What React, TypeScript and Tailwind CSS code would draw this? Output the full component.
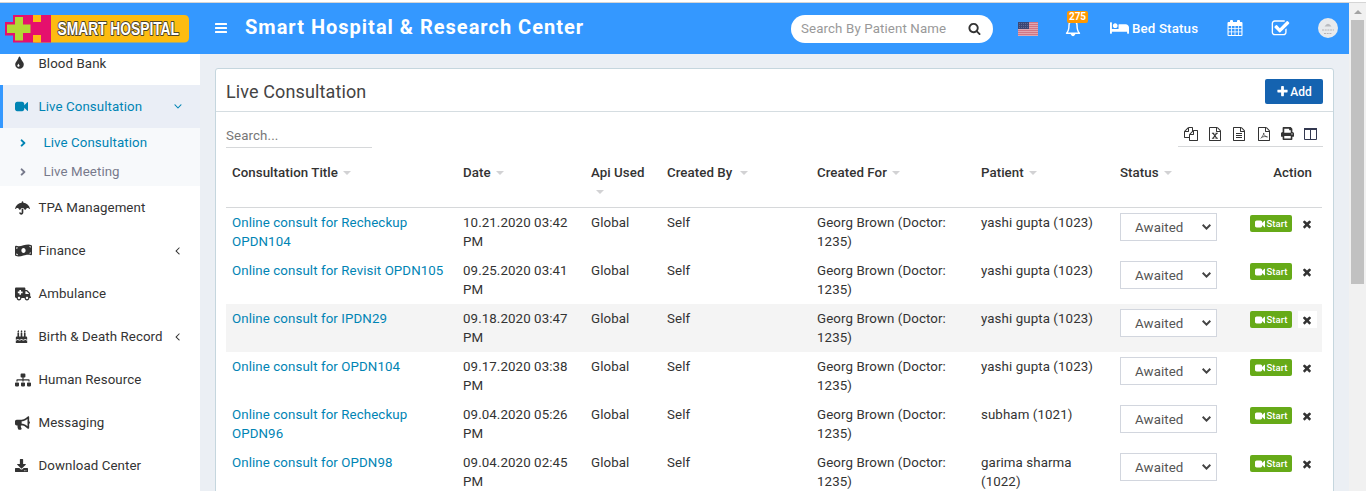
import React from "react";
import {
  FaAmbulance, FaAngleRight, FaBed, FaBirthdayCake, FaBullhorn, FaDownload,
  FaMoneyBillWave, FaPrint, FaSitemap, FaUmbrella,
} from "react-icons/fa";

const TINT = "M896 1152q0-36-20-69-1-1-15.500-22.500t-25.500-38-25-44-21-50.500q-4-16-21-16t-21 16q-7 23-21 50.500t-25 44-25.500 38-15.500 22.500q-20 33-20 69 0 53 37.500 90.500t90.500 37.500 90.500-37.500 37.500-90.500zm512-128q0 212-150 362t-362 150-362-150-150-362q0-145 81-275 6-9 62.500-90.500t101-151 99.500-178 83-201.500q9-30 34-47t51-17 51.500 17 33.500 47q28 93 83 201.500t99.500 178 101 151 62.500 90.500q81 127 81 275z";
const SEARCH = "M1216 832q0-185-131.500-316.500t-316.500-131.500-316.500 131.500-131.500 316.500 131.500 316.500 316.500 131.500 316.500-131.500 131.500-316.500zm512 832q0 52-38 90t-90 38q-54 0-90-38l-343-342q-179 124-399 124-143 0-273.500-55.500t-225-150-150-225-55.500-273.500 55.500-273.500 150-225 225-150 273.500-55.500 273.500 55.500 225 150 150 225 55.500 273.500q0 220-124 399l343 343q37 37 37 90z";
const PLUS = "M1600 736v192q0 40-28 68t-68 28h-416v416q0 40-28 68t-68 28h-192q-40 0-68-28t-28-68v-416h-416q-40 0-68-28t-28-68v-192q0-40 28-68t68-28h416v-416q0-40 28-68t68-28h192q40 0 68 28t28 68v416h416q40 0 68 28t28 68z";
const TIMES = "M1490 1322q0 40-28 68l-136 136q-28 28-68 28t-68-28l-294-294-294 294q-28 28-68 28t-68-28l-136-136q-28-28-28-68t28-68l294-294-294-294q-28-28-28-68t28-68l136-136q28-28 68-28t68 28l294 294 294-294q28-28 68-28t68 28l136 136q28 28 28 68t-28 68l-294 294 294 294q28 28 28 68z";
const VIDEO = "M1792 352v1088q0 42-39 59-13 5-25 5-27 0-45-19l-403-403v166q0 119-84.500 203.500t-203.500 84.500h-704q-119 0-203.500-84.500t-84.500-203.500v-704q0-119 84.500-203.500t203.500-84.500h704q119 0 203.500 84.500t84.500 203.500v165l403-402q18-19 45-19 12 0 25 5 39 17 39 59z";
const ANGLE = "M1203 544q0 13-10 23l-393 393 393 393q10 10 10 23t-10 23l-50 50q-10 10-23 10t-23-10l-466-466q-10-10-10-23t10-23l466-466q10-10 23-10t23 10l50 50q10 10 10 23z";
const CHECK = "M1472 930v318q0 119-84.500 203.500t-203.500 84.500h-832q-119 0-203.500-84.500t-84.500-203.500v-832q0-119 84.500-203.500t203.500-84.500h832q63 0 117 25 15 7 18 23 3 17-9 29l-49 49q-10 10-23 10-3 0-9-2-23-6-45-6h-832q-66 0-113 47t-47 113v832q0 66 47 113t113 47h832q66 0 113-47t47-113v-254q0-13 9-22l64-64q10-10 23-10 6 0 12 3 20 8 20 29zm231-489l-814 814q-24 24-57 24t-57-24l-430-430q-24-24-24-57t24-57l110-110q24-24 57-24t57 24l263 263 647-647q24-24 57-24t57 24l110 110q24 24 24 57t-24 57z";
const COPY = "M1696 384q40 0 68 28t28 68v1216q0 40-28 68t-68 28h-960q-40 0-68-28t-28-68v-288h-544q-40 0-68-28t-28-68v-672q0-40 20-88t48-76l408-408q28-28 76-48t88-20h416q40 0 68 28t28 68v328q68-40 128-40h416zm-544 213l-299 299h299v-299zm-640-384l-299 299h299v-299zm196 647l316-316v-416h-384v416q0 40-28 68t-68 28h-416v640h512v-256q0-40 20-88t48-76zm956 804v-1152h-384v416q0 40-28 68t-68 28h-416v640h896z";
const FILE = "M1596 380q28 28 48 76t20 88v1152q0 40-28 68t-68 28h-1344q-40 0-68-28t-28-68v-1600q0-40 28-68t68-28h896q40 0 88 20t76 48zm-444-244v376h376q-10-29-22-41l-313-313q-12-12-41-22zm384 1528v-1024h-416q-40 0-68-28t-28-68v-416h-768v1536h1280z";

function Glyph({ d, className, children }: { d?: string; className?: string; children?: React.ReactNode }) {
  return (
    <svg viewBox="0 0 1792 1792" fill="currentColor" className={className} aria-hidden="true">
      {d && <path d={d} />}
      {children}
    </svg>
  );
}

function Logo() {
  return (
    <svg width="185" height="30" viewBox="0 0 185 30" role="img" className="overflow-visible">
      <path d="M30 0H179Q184 0 184 5V22.500Q184 27.500 179 27.500H30Z" fill="#fdbc11" />
      <path d="M8 0H46V27.500H8V20.500H0V7H8Z" fill="#e5106d" />
      <path d="M28 0H36V7H28ZM28 20H36V27.500H28Z" fill="#fdbc11" />
      <path d="M10 2H18V9.500H25.500V18H18V25.500H10V18H2V9.500H10Z" fill="#b2d935" />
      <text x="52.500" y="20" fontFamily="'Liberation Sans', Arial, sans-serif" fontWeight="700" fontSize="17.500"
        textLength="121.500" lengthAdjust="spacingAndGlyphs" fill="#fff" stroke="#4c432e" strokeWidth="2"
        strokeLinejoin="round" paintOrder="stroke">SMART HOSPITAL</text>
    </svg>
  );
}

function Flag() {
  return (
    <svg width="20" height="14" viewBox="0 0 20 14">
      <rect width="20" height="14" fill="#f3e6ea" />
      {[0, 2, 4, 6, 8, 10, 12].map((y) => (
        <rect key={y} y={y + 0.300} width="20" height="1.100" fill="#c2475a" />
      ))}
      <rect width="11" height="7" fill="#3c4674" />
      {[1.500, 3.500, 5.500].map((y) => (
        <path key={y} d={`M1 ${y}H10`} stroke="#8189ab" strokeWidth="0.700" strokeDasharray="0.800 1.200" />
      ))}
    </svg>
  );
}

function TopBar() {
  return (
    <header className="flex h-[51px] shrink-0 items-center bg-[#3498ff] text-white">
      <div className="w-[200px] pt-[3px] pl-[5px]"><Logo /></div>
      <svg width="12" height="11" viewBox="0 0 12 11" className="-mt-[1px] ml-[15px]" fill="#fff">
        <rect y="0" width="12" height="2" rx=".5" />
        <rect y="4" width="12" height="2" rx=".5" />
        <rect y="8" width="12" height="2" rx=".5" />
      </svg>
      <h1 className="-mt-[4px] ml-[18px] w-[546px] text-[20px] leading-6 font-bold tracking-[1px] whitespace-nowrap">Smart Hospital &amp; Research Center</h1>
      <div className="flex h-7 w-[202px] items-center rounded-full bg-white pl-2.5 text-[13.300px] text-[#999]">
        <span className="w-[167px] tracking-[0.120px] whitespace-nowrap">Search By Patient Name</span>
        <Glyph d={SEARCH} className="-mt-[1px] h-[13px] w-[13px] text-[#333]" />
      </div>
      <div className="ml-[25px]"><Flag /></div>
      <div className="relative ml-[27px] h-[17px] w-[16px]">
        <svg width="16" height="17" viewBox="0 0 16 17" fill="none" stroke="#fff" strokeWidth="1.400" strokeLinejoin="round">
          <path d="M1.500 13.300C3.300 11.500 4 8.500 4 5C4 3 5.500 1.500 8 1.500S12 3 12 5C12 8.500 12.700 11.500 14.500 13.300Z" />
          <path d="M6.300 14Q8 17 9.700 14Z" fill="#fff" />
        </svg>
        <span className="absolute -top-[9px] left-[2px] flex h-3 w-[21px] items-center justify-center rounded-[2px] bg-[#ff9800] text-[10px] leading-none font-bold">275</span>
      </div>
      <div className="ml-[29px] flex w-[117px] items-center text-[13.300px] font-medium">
        <FaBed className="-mt-[2px] mr-[3px] h-[18px] w-[19px]" />
        <span className="tracking-[0.150px] whitespace-nowrap">Bed Status</span>
      </div>
      <svg width="16" height="16" viewBox="0 0 16 16" className="-mt-[2px]" fill="#fff">
        <path fillRule="evenodd" d="M1.500 2H14.500Q15.500 2 15.500 3V15Q15.500 16 14.500 16H1.500Q.5 16 .5 15V3Q.5 2 1.500 2ZM1.600 6V8.200H4.200V6ZM5 6V8.200H7.600V6ZM8.400 6V8.200H11V6ZM11.800 6V8.200H14.400V6ZM1.600 9V11.500H4.200V9ZM5 9V11.500H7.600V9ZM8.400 9V11.500H11V9ZM11.800 9V11.500H14.400V9ZM1.600 12.300V14.900H4.200V12.300ZM5 12.300V14.900H7.600V12.300ZM8.400 12.300V14.900H11V12.300ZM11.800 12.300V14.900H14.400V12.300Z" />
        <rect x="3" y="0" width="3" height="4.500" rx="1" />
        <rect x="10" y="0" width="3" height="4.500" rx="1" />
      </svg>
      <Glyph d={CHECK} className="ml-[28px] h-[19px] w-[19px]" />
      <svg width="20" height="20" viewBox="0 0 20 20" className="-mt-[1px] ml-[28px]">
        <circle cx="10" cy="10" r="10" fill="#e8eaed" />
        <path d="M6.500 8.500Q10 3 13.500 8.500Z" fill="#b9bbc0" />
        <path d="M4 12H16M6 15.500H14" stroke="#b9b5b6" strokeDasharray="2 .7" />
      </svg>
    </header>
  );
}

const item = "flex h-[43px] shrink-0 items-center pl-[15px] text-[13.300px] tracking-[0.080px] text-[#333] whitespace-nowrap";

function Item({ icon, label, open }: { icon: React.ReactNode; label: string; open?: boolean }) {
  return (
    <div className={item}>
      <span className="w-[23.500px]">{icon}</span>
      <span className="w-[132.500px]">{label}</span>
      {open && <Glyph d={ANGLE} className="h-[13px] w-[13px]" />}
    </div>
  );
}

function Sidebar() {
  return (
    <aside className="flex w-[200px] shrink-0 flex-col overflow-hidden bg-white">
      <div className="-mt-[12px] flex flex-col">
        <Item icon={<Glyph d={TINT} className="-ml-[3px] h-[15px] w-[15px]" />} label="Blood Bank" />
      </div>
      <div className="flex h-[43px] shrink-0 items-center border-l-[3px] border-[#3498ff] bg-[#eaeef6] pl-[12px] text-[13.300px] tracking-[0.080px] whitespace-nowrap text-[#0084b4]">
        <span className="w-[23.500px]"><Glyph d={VIDEO} className="h-[13px] w-[13px]" /></span>
        <span className="w-[132.500px]">Live Consultation</span>
        <Glyph d={ANGLE} className="h-[13px] w-[13px] -rotate-90" />
      </div>
      <div className="flex h-[58px] shrink-0 flex-col bg-[#f7f9fb] text-[13.300px] tracking-[0.080px] whitespace-nowrap">
        <div className="flex h-[29px] items-center pl-[17px] text-[#0084b4]"><FaAngleRight className="mr-[14.500px] h-3 w-3" />Live Consultation</div>
        <div className="flex h-[29px] items-center pl-[17px] text-[#777a8c]"><FaAngleRight className="mr-[14.500px] h-3 w-3" />Live Meeting</div>
      </div>
      <Item icon={<FaUmbrella className="h-[14px] w-[15px]" />} label="TPA Management" />
      <Item icon={<FaMoneyBillWave className="h-[15px] w-[17px]" />} label="Finance" open />
      <Item icon={<FaAmbulance className="h-[14px] w-[16px]" />} label="Ambulance" />
      <Item icon={<FaBirthdayCake className="h-[13px] w-[13px]" />} label="Birth & Death Record" open />
      <Item icon={<FaSitemap className="h-[14px] w-[16px]" />} label="Human Resource" />
      <Item icon={<FaBullhorn className="h-[14px] w-[15px]" />} label="Messaging" />
      <Item icon={<FaDownload className="h-[13px] w-[13px]" />} label="Download Center" />
    </aside>
  );
}

function Tools() {
  return (
    <div className="flex h-[29px] w-[145px] items-center justify-between border-b border-[#d6d8da] px-[6px] pt-[3px] text-[#333]">
      <Glyph d={COPY} className="h-[14px] w-[14px]" />
      <Glyph d={FILE} className="h-[14px] w-[14px]"><path d="M500 800h300M960 800h300M500 1440h300M960 1440h300M660 820l440 600M1100 820l-440 600" stroke="currentColor" strokeWidth="140" /></Glyph>
      <Glyph d={FILE} className="h-[14px] w-[14px]"><path d="M512 832h768M512 1088h768M512 1344h768" stroke="currentColor" strokeWidth="128" /></Glyph>
      <Glyph d={FILE} className="h-[14px] w-[14px]"><path d="M480 1470C600 1350 850 1050 860 760M860 760C860 1100 1100 1230 1340 1270M560 1330C800 1220 1100 1180 1340 1270" fill="none" stroke="currentColor" strokeWidth="90" /></Glyph>
      <FaPrint className="h-[13px] w-[13px]" />
      <svg width="13" height="12" viewBox="0 0 13 12" fill="none" stroke="#333850"><path d="M.5 .5H12.500V11.500H.5ZM6.500 1V11" /><path d="M0 1H13" strokeWidth="2" /></svg>
    </div>
  );
}

function Sort({ className }: { className?: string }) {
  return <svg width="8" height="4" viewBox="0 0 8 4" className={"inline-block align-middle " + (className ?? "ml-[5px]")}><path d="M0 0H8L4 4Z" fill="#d2d2d4" /></svg>;
}

const rows = [
  ["Online consult for Recheckup OPDN104", "10.21.2020 03:42 PM", "yashi gupta (1023)"],
  ["Online consult for Revisit OPDN105", "09.25.2020 03:41 PM", "yashi gupta (1023)"],
  ["Online consult for IPDN29", "09.18.2020 03:47 PM", "yashi gupta (1023)"],
  ["Online consult for OPDN104", "09.17.2020 03:38 PM", "yashi gupta (1023)"],
  ["Online consult for Recheckup OPDN96", "09.04.2020 05:26 PM", "subham (1021)"],
  ["Online consult for OPDN98", "09.04.2020 02:45 PM", "garima sharma (1022)"],
];

const cols = "grid grid-cols-[231px_128px_76px_150px_164px_139px_208px]";

function ConsultationTable() {
  return (
    <div className="mt-[10px] w-[1096px] text-[13.300px] leading-[19px] text-[#333]">
      <div className={cols + " h-[50px] border-b border-[#d6d8da] pt-[5px] font-medium tracking-[0.050px] *:px-1.5"}>
        <div>Consultation Title<Sort /></div>
        <div>Date<Sort /></div>
        <div><span className="whitespace-nowrap">Api Used</span><br /><Sort /></div>
        <div>Created By<Sort className="ml-[8px]" /></div>
        <div>Created For<Sort /></div>
        <div>Patient<Sort /></div>
        <div className="flex justify-between"><span>Status<Sort /></span><span className="pr-1">Action</span></div>
      </div>
      {rows.map(([title, date, patient], i) => (
        <div key={title} className={cols + " h-12 pt-[5px] tracking-[0.090px] *:px-1.5 " + (i === 2 ? "bg-[#f4f4f4]" : "")}>
          <div className="text-[#0084b4]">{title}</div>
          <div>{date}</div>
          <div>Global</div>
          <div>Self</div>
          <div>Georg Brown (Doctor: 1235)</div>
          <div>{patient}</div>
          <div className="flex items-start *:shrink-0">
            <div className="flex h-7 w-[97px] items-center justify-between border border-[#d2d6de] bg-white pr-[5px] pl-[14px] text-[#555]">
              Awaited
              <svg width="9" height="6" viewBox="0 0 9 6" fill="none" stroke="#444" strokeWidth="2"><path d="M.7 .8L4.500 4.600L8.300 .8" /></svg>
            </div>
            <div className="mt-[2px] ml-[33px] flex h-[17px] w-[42px] items-center justify-center gap-[2px] rounded-[2px] bg-[#66aa18] text-[9.500px] leading-none font-medium tracking-normal text-white">
              <Glyph d={VIDEO} className="h-[10px] w-[10px]" />Start
            </div>
            <div className={"mt-[2px] ml-[6px] flex h-[17px] w-[19px] items-center justify-center pr-[1px] " + (i === 2 ? "bg-white" : "")}>
              <Glyph d={TIMES} className="h-[12px] w-[12px]" />
            </div>
          </div>
        </div>
      ))}
    </div>
  );
}

export default function App() {
  return (
    <div className="flex h-[491px] w-[1366px] flex-col overflow-hidden bg-white font-['Roboto',sans-serif]">
      <div className="h-[3px] shrink-0 border-b border-[#d5d5d5] bg-white" />
      <div className="flex min-h-0 flex-1">
        <div className="flex w-[1349px] flex-col">
          <TopBar />
          <div className="flex min-h-0 flex-1">
            <Sidebar />
            <main className="flex-1 overflow-hidden bg-[#ebeff4] pt-[14px] pr-[15px] pl-[15px]">
              <section className="h-[500px] rounded-[3px] border border-[#c5d6de] bg-white">
                <div className="flex h-[43px] items-center justify-between border-b border-[#d5dde1] px-[10px] pt-[2px]">
                  <h2 className="text-[18px] tracking-[0.120px] text-[#444]">Live Consultation</h2>
                  <button className="flex h-[25px] w-[58px] items-center justify-center rounded-[2px] bg-[#1563b0] pt-px text-[12px] font-medium text-white">
                    <Glyph d={PLUS} className="mr-[1px] h-[13px] w-[13px]" />Add
                  </button>
                </div>
                <div className="px-[10px] pt-[6px]">
                  <div className="flex h-[30px] items-start justify-between">
                    <div className="mt-[5px] flex h-[25px] w-[146px] items-center border-b border-[#d6d8da] pt-[2px] text-[13.300px] tracking-[0.120px] text-[#777]">Search...</div>
                    <Tools />
                  </div>
                  <ConsultationTable />
                </div>
              </section>
            </main>
          </div>
        </div>
        <div className="flex w-[17px] flex-col items-center bg-[#f1f1f1]">
          <div className="flex h-[17px] items-center"><svg width="8" height="4" viewBox="0 0 8 4"><path d="M0 4L4 0L8 4Z" fill="#a3a3a3" /></svg></div>
          <div className="h-[264px] w-[13px] bg-[#c1c1c1]" />
        </div>
      </div>
    </div>
  );
}
